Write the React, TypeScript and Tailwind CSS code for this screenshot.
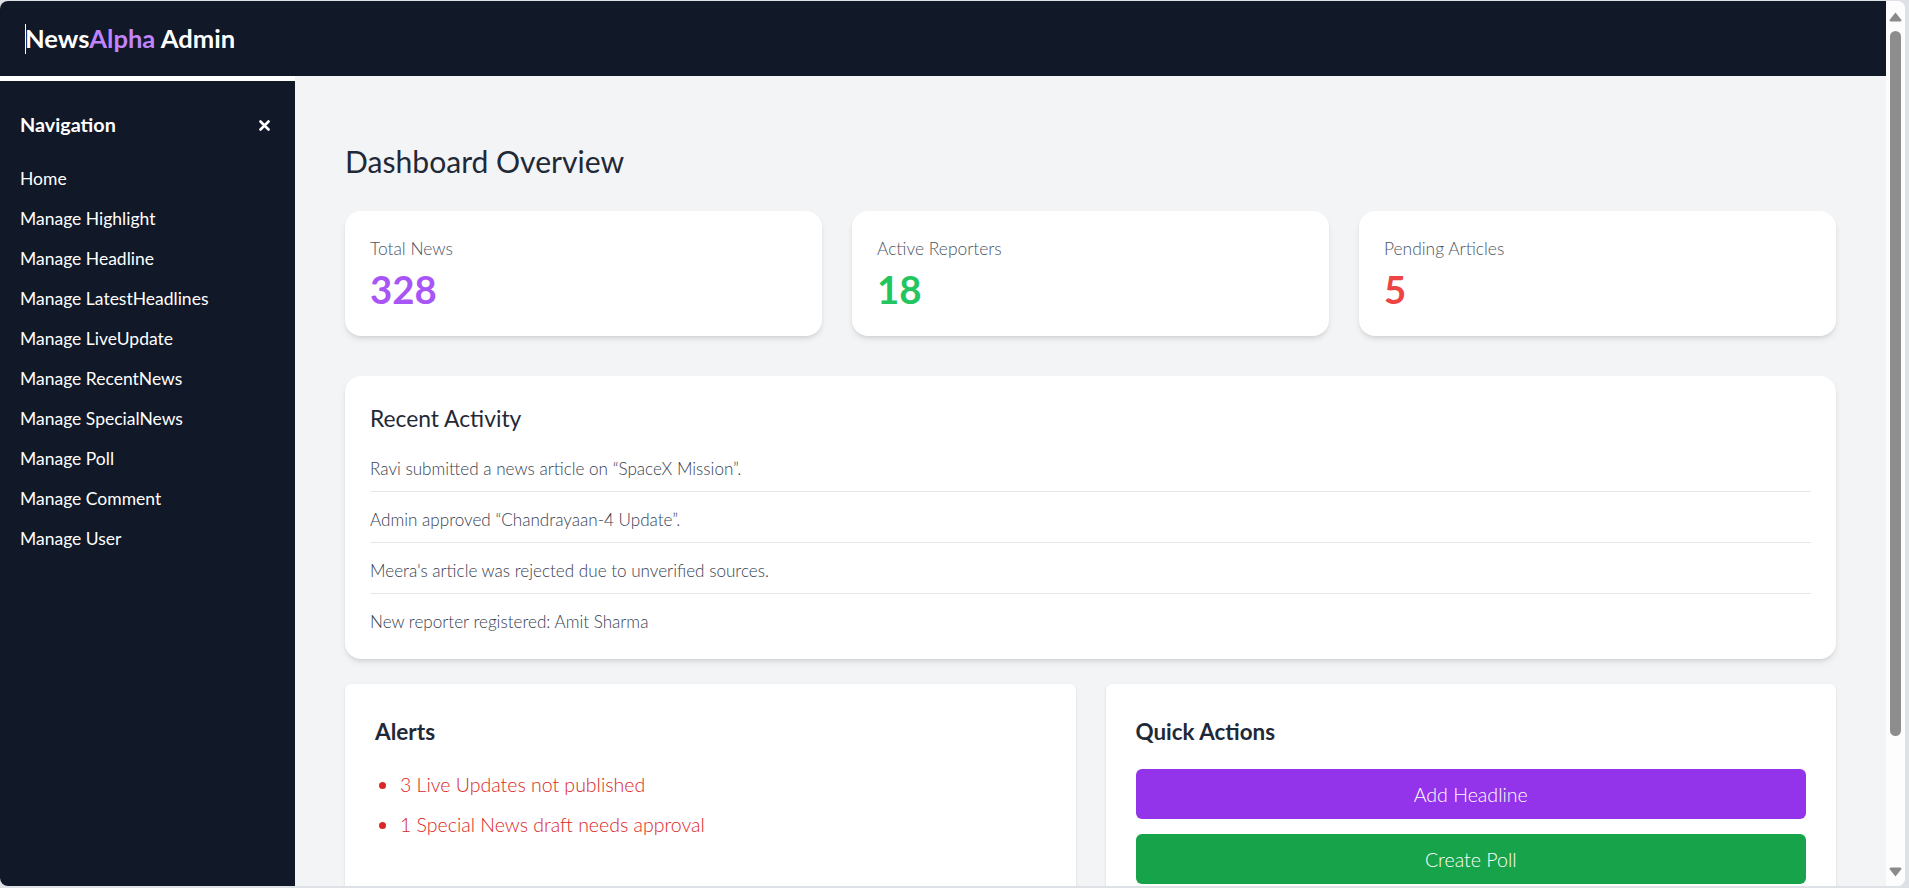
const nav = ["Home","Manage Highlight","Manage Headline","Manage LatestHeadlines","Manage LiveUpdate","Manage RecentNews","Manage SpecialNews","Manage Poll","Manage Comment","Manage User"];
const stats = [
  { label: "Total News", value: "328", color: "text-[#a855f7]" },
  { label: "Active Reporters", value: "18", color: "text-[#22c55e]" },
  { label: "Pending Articles", value: "5", color: "text-[#ef4444]" },
];
const activity = [
  "Ravi submitted a news article on “SpaceX Mission”.",
  "Admin approved “Chandrayaan-4 Update”.",
  "Meera's article was rejected due to unverified sources.",
  "New reporter registered: Amit Sharma",
];
const alerts = ["3 Live Updates not published", "1 Special News draft needs approval"];

function Scrollbar() {
  return (
    <div className="w-[19px] shrink-0 bg-[#fdfdfd] flex flex-col items-center">
      <svg width="13" height="10" viewBox="0 0 13 10" className="mt-[11px] shrink-0"><path d="M6.5 0.5 L12.5 8 Q12.5 9.5 11 9.5 L2 9.5 Q0.5 9.5 0.5 8 Z" fill="#8a8a8a" /></svg>
      <div className="mt-[9px] w-[11px] h-[705px] rounded-[6px] bg-[#8d8d8d] shrink-0" />
      <svg width="13" height="10" viewBox="0 0 13 10" className="mt-[131px] shrink-0"><path d="M6.5 9.5 L12.5 2 Q12.5 0.5 11 0.5 L2 0.5 Q0.5 0.5 0.5 2 Z" fill="#8a8a8a" /></svg>
    </div>
  );
}

export default function App() {
  return (
    <div className="h-[888px] w-[1909px] overflow-hidden bg-[#dee1e6] pt-px pr-[4px] pb-[2px] font-['Lato','Noto_Sans',sans-serif]">
      <div className="h-[885px] flex overflow-hidden rounded-[8px] bg-white">
        <div className="w-[1886px] shrink-0 flex flex-col overflow-hidden">
          <header className="h-[75px] shrink-0 bg-[#111827] flex items-center pl-[25px] text-white text-[25.6px] font-bold">
            <span className="w-px h-[30px] bg-white" />
            <span className="-ml-px">News<span className="text-[#c084fc]">Alpha</span> Admin</span>
          </header>
          <div className="flex flex-1 min-h-0">
            <div className="w-[295px] shrink-0 bg-white pt-[5px] flex">
              <aside className="w-full bg-[#111827] text-white px-5 pt-[29px]">
                <div className="flex items-center justify-between h-[30px] pr-[5px]">
                  <span className="text-[19.8px] font-bold">Navigation</span>
                  <svg width="11" height="11" viewBox="0 0 11 11" className="shrink-0" aria-label="close">
                    <path d="M1.5 1.5 L9.5 9.5 M9.5 1.5 L1.5 9.5" stroke="#ffffff" strokeWidth="2.6" strokeLinecap="round" />
                  </svg>
                </div>
                <ul className="mt-[19px] flex flex-col">
                  {nav.map((n) => (
                    <li key={n} className="h-[40px] flex items-center text-[17.5px]">{n}</li>
                  ))}
                </ul>
              </aside>
            </div>
            <main className="flex-1 min-w-0 bg-[#f3f4f6] pl-[50px] pr-[50px] pt-[63px] overflow-hidden">
              <h1 className="text-[30.1px] leading-[44px] font-normal text-[#1f2937]">Dashboard Overview</h1>
              <div className="mt-[28px] grid grid-cols-3 gap-[30px]">
                {stats.map((s) => (
                  <div key={s.label} className="h-[125px] bg-white rounded-[16px] shadow-md px-[25px] pt-[26px]">
                    <div className="text-[17.4px] leading-6 font-light text-[#4b5563]">{s.label}</div>
                    <div className={`mt-[4px] text-[38.4px] leading-[48px] font-bold ${s.color}`}>{s.value}</div>
                  </div>
                ))}
              </div>
              <section className="mt-[40px] bg-white rounded-[16px] shadow-md h-[283px] px-[25px] pt-[26px]">
                <h2 className="text-[22.8px] leading-[32px] font-normal text-[#1f2937]">Recent Activity</h2>
                <ul className="mt-[7px] flex flex-col">
                  {activity.map((a, i) => (
                    <li key={a} className={`h-[51px] pt-[5px] flex items-center text-[17.1px] font-light text-[#374151] ${i < 3 ? "border-b border-[#e5e7eb]" : ""}`}>{a}</li>
                  ))}
                </ul>
              </section>
              <div className="mt-[25px] grid grid-cols-2 gap-[30px]">
                <section className="bg-white rounded-[6px] shadow-sm h-[300px] px-[30px] pt-[32px]">
                  <h3 className="text-[22.6px] leading-[32px] font-bold text-[#1f2937]">Alerts</h3>
                  <ul className="mt-[17px] flex flex-col text-[#dc2626] text-[19.5px] font-light">
                    {alerts.map((a) => (
                      <li key={a} className="h-[40px] flex items-center">
                        <span className="w-[7px] h-[7px] rounded-full bg-[#dc2626] ml-[4px] mr-[14px] shrink-0" />
                        {a}
                      </li>
                    ))}
                  </ul>
                </section>
                <section className="bg-white rounded-[6px] shadow-sm h-[300px] px-[30px] pt-[32px]">
                  <h3 className="text-[22.4px] leading-[32px] font-bold text-[#1f2937]">Quick Actions</h3>
                  <div className="mt-[21px] flex flex-col gap-[15px]">
                    <button className="h-[50px] pt-[1px] rounded-[6px] bg-[#9333ea] text-white text-[19.6px] font-light">Add Headline</button>
                    <button className="h-[50px] pt-[1px] rounded-[6px] bg-[#16a34a] text-white text-[19.6px] font-light">Create Poll</button>
                  </div>
                </section>
              </div>
            </main>
          </div>
        </div>
        <Scrollbar />
      </div>
    </div>
  );
}
